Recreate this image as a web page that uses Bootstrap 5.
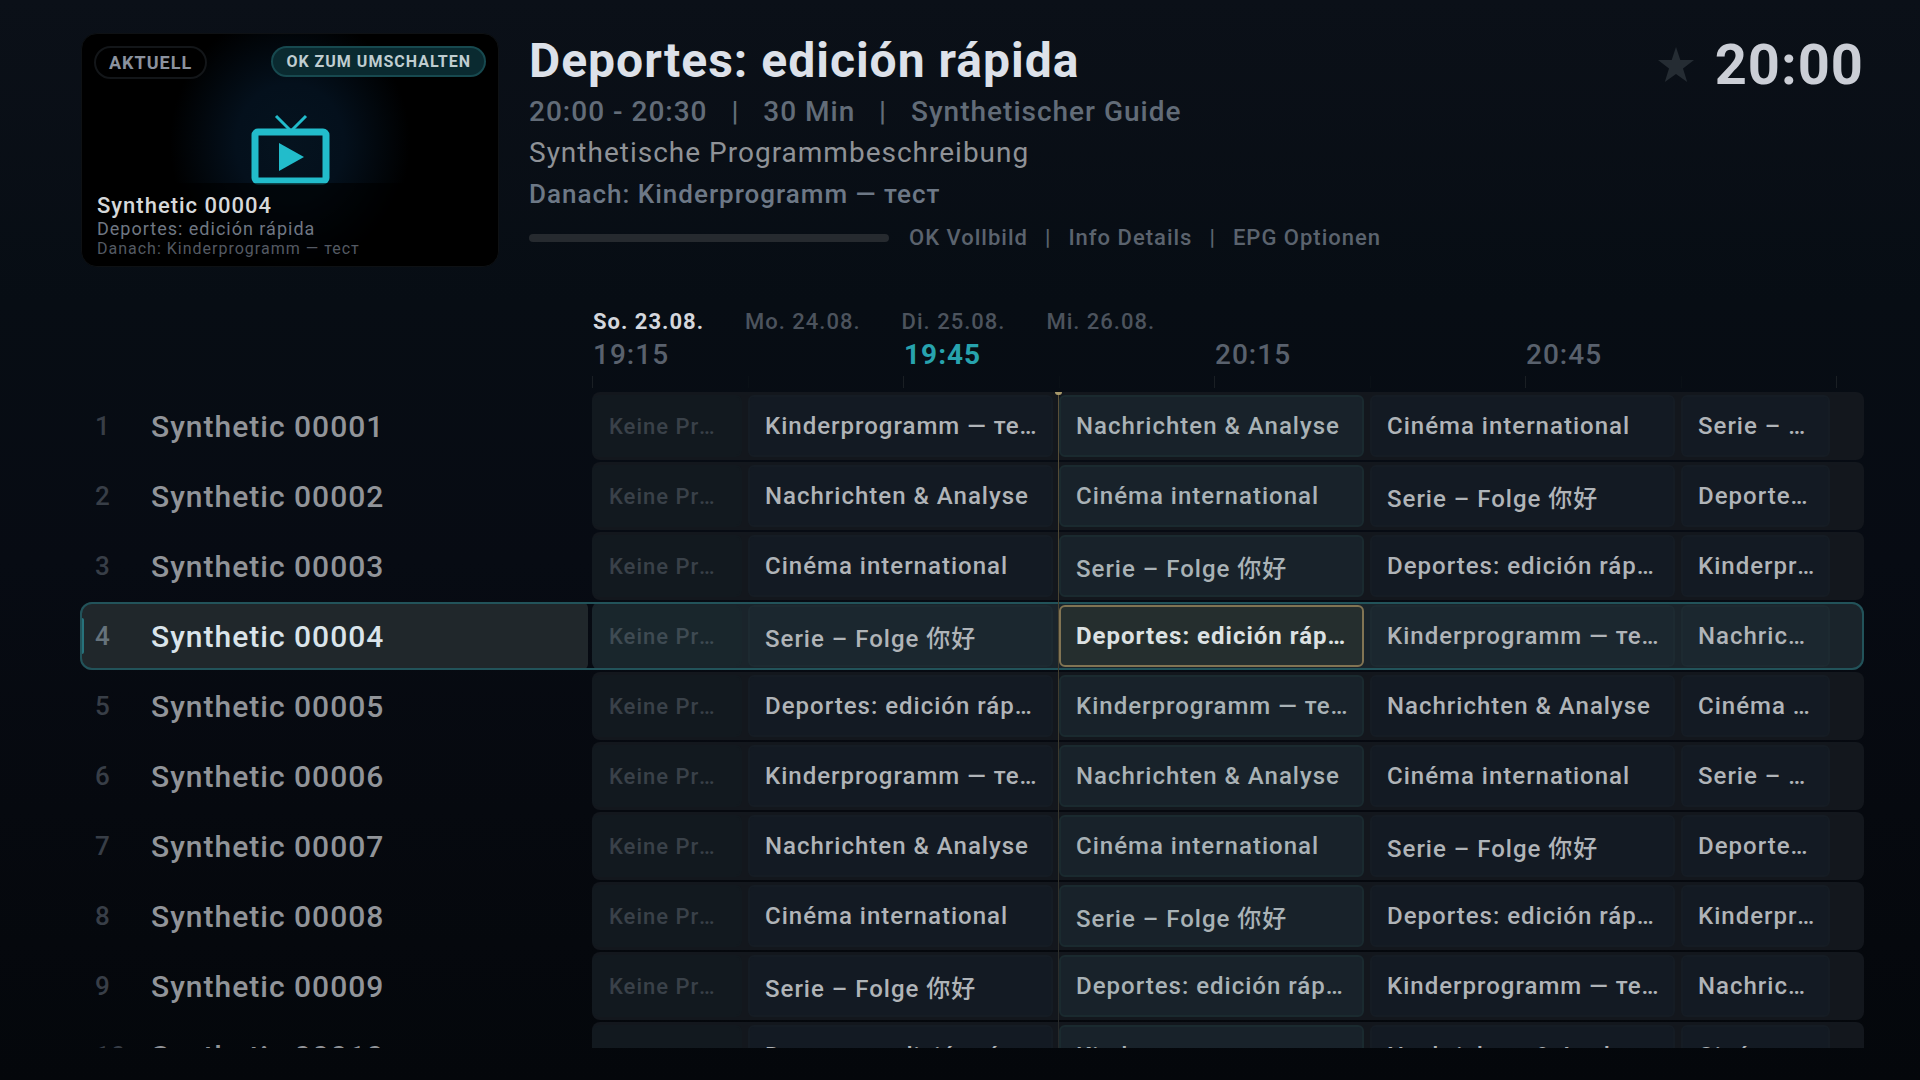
<!DOCTYPE html>
<html lang="de">
<head>
<meta charset="utf-8">
<meta name="viewport" content="width=device-width, initial-scale=1">
<title>TV Guide</title>
<link href="https://cdn.jsdelivr.net/npm/bootstrap@5.3.0/dist/css/bootstrap.min.css" rel="stylesheet">
<style>
  body {
    font-family: Roboto, "Noto Sans CJK SC", sans-serif;
    font-weight: 500;
    letter-spacing: 1px;
    color: #b0b4b8;
    background: linear-gradient(180deg, #0b1018 0%, #070d14 28%, #070b13 52%, #06090f 75%, #04070b 100%);
  }
  button { font: inherit; letter-spacing: inherit; color: inherit; background: none; border: 0; padding: 0; text-align: left; }
  .guide { padding: 33px 56px 32px 80px; }

  /* header */
  .top-info { gap: 30px; padding-left: 1px; }
  .preview { width: 418px; height: 234px; border-radius: 16px; border: 1px solid #0e1114; background: radial-gradient(ellipse 120px 132px at 50% 47%, #05131f 0%, #04101c 45%, #000 100%) #000; }
  .preview-tags { padding: 12px 12px 0; }
  .pill { border-radius: 18px; border: 2px solid; font-weight: 700; text-transform: uppercase; }
  .pill-now { font-size: 18px; line-height: 29px; padding: 0 13px; border-color: #131619; background: #000; color: #8b929e; }
  .pill-ok { font-size: 16px; line-height: 27px; padding: 0 13px; border-color: #17494f; background: #0a2a30; color: #bfcdd0; }
  .tv-icon { left: 169px; top: 80px; width: 80px; height: 72px; }
  .preview-text { padding: 11px 15px 8px; background: rgba(0, 0, 0, .62); }
  .preview-name { font-size: 22px; line-height: 24px; color: #d6d8da; }
  .preview-title { font-size: 18px; line-height: 22px; font-weight: 400; color: #6f7783; }
  .preview-next { font-size: 16px; line-height: 18px; font-weight: 400; color: #545a63; }

  .prog-title { font-size: 48px; line-height: 56px; font-weight: 700; color: #dde1e9; margin-bottom: 3px; }
  .prog-meta { font-size: 28px; line-height: 40px; color: #626c78; white-space: pre; }
  .prog-desc { font-size: 28px; line-height: 42px; font-weight: 400; color: #8f9297; }
  .prog-next { font-size: 26px; line-height: 40px; color: #6d7886; }
  .hint-row { gap: 20px; margin-top: 10px; font-size: 22px; line-height: 28px; color: #5b636e; }
  .hints { gap: 17px; }
  .prog-bar { width: 360px; height: 8px; border-radius: 4px; background: #262a2f; --bs-progress-bar-bg: #22bccb; }
  .star { width: 36px; height: 36px; }
  .clock-box { gap: 21px; height: 64px; }
  .clock { font-size: 56px; line-height: 64px; font-weight: 700; color: #cbced6; }

  /* time header */
  .time-head { margin-top: 39px; padding-left: 512px; }
  .days { gap: 41px; padding-left: 1px; font-size: 22px; line-height: 32px; color: #4c535d; }
  .days .active { color: #d4d7dd; font-weight: 700; }
  .scale { display: grid; grid-template-columns: repeat(4, 1fr); padding: 0 27px 0 1px; margin-bottom: 4px; font-size: 28px; line-height: 34px; color: #59616d; }
  .scale .current { color: #27a3ae; font-weight: 700; }
  .ticks { display: grid; grid-template-columns: repeat(8, 1fr) 2px; height: 12px; padding-right: 26px; margin-bottom: 4px; }
  .ticks i { border-left: 1px solid #0a1016; }
  .ticks i:nth-child(odd) { border-color: #1a1f24; }

  /* channel rows */
  .rows { min-height: 0; }
  .row-stack { gap: 2px; }
  .ch-row { height: 68px; flex: none; gap: 4px; position: relative; }
  .ch-cell { width: 508px; padding-left: 15px; flex: none; }
  .ch-num { width: 56px; font-size: 26px; color: #383e47; }
  .ch-name { font-size: 30px; color: #919499; }
  .lane { display: grid; grid-template-columns: 150fr 305fr 305fr 305fr 149fr; gap: 6px; padding: 3px 34px 3px 0; border-radius: 8px; background: #13171d; min-width: 0; }
  .slot { min-width: 0; padding: 0 13px 0 15px; border: 2px solid #151c24; border-radius: 6px; background: #131a23; font-size: 24px; line-height: normal; }
  .none { font-size: 22px; color: #3a4149; background: #12191f; border-color: #12191f; }
  .onair { background: #18222a; border-color: #1a2a2f; color: #a9b2b6; }
  .picked .ch-cell { background: #20272b; border-radius: 12px 6px 6px 12px; }
  .picked .ch-num { color: #66737c; }
  .picked .ch-name { color: #dae4ea; }
  .picked .lane { background: #1a242b; border-radius: 8px 12px 12px 8px; }
  .picked .slot { background: #1b272f; border-color: #1d2a31; }
  .picked .none { background: #19262c; border-color: #19262c; color: #3f4b53; }
  .picked .focused { background: #252e2e; border-color: #827453; color: #dce1e2; font-weight: 700; }
  .picked::after { content: ""; position: absolute; inset: 0; border: 2px solid #22535a; border-radius: 12px; pointer-events: none; }
  .picked::before { content: ""; position: absolute; left: 0; top: 16px; width: 4px; height: 36px; border-radius: 2px; background: #27727b; }

  .now-layer { left: 512px; right: 28px; top: 0; bottom: 0; pointer-events: none; }
  .now-line { left: 37.5%; top: 0; bottom: 0; width: 1px; margin-left: -1px; background: linear-gradient(180deg, #5c5138 0%, #443f2f 40%, #26292a 100%); }
  .now-tip { left: 37.5%; top: 0; margin-left: -4px; width: 7px; height: 3px; border-radius: 0 0 4px 4px; background: #a8996b; }
</style>
</head>
<body>
<main class="guide d-flex flex-column vh-100 overflow-hidden">

  <header class="top-info d-flex align-items-start">
    <section class="preview position-relative overflow-hidden flex-shrink-0 d-flex flex-column justify-content-between" aria-label="Vorschau">
      <svg class="tv-icon position-absolute" viewBox="0 0 80 72" fill="none" aria-hidden="true">
        <path d="M25 2l15 15L55 2" stroke="#22bccb" stroke-width="3"/>
        <rect x="4" y="18" width="71" height="49" rx="3" stroke="#22bccb" stroke-width="7"/>
        <path d="M28 29v28l25-14z" fill="#22bccb"/>
      </svg>
      <div class="preview-tags d-flex justify-content-between align-items-start">
        <span class="pill pill-now">Aktuell</span>
        <span class="pill pill-ok">OK zum Umschalten</span>
      </div>
      <div class="preview-text position-relative">
        <div class="preview-name">Synthetic 00004</div>
        <div class="preview-title">Deportes: edición rápida</div>
        <div class="preview-next">Danach: Kinderprogramm — тест</div>
      </div>
    </section>

    <section class="flex-grow-1">
      <h1 class="prog-title">Deportes: edición rápida</h1>
      <div class="prog-meta">20:00 - 20:30   |   30 Min   |   Synthetischer Guide</div>
      <div class="prog-desc">Synthetische Programmbeschreibung</div>
      <div class="prog-next">Danach: Kinderprogramm — тест</div>
      <div class="hint-row d-flex align-items-center">
        <div class="prog-bar progress" role="progressbar" aria-label="Fortschritt" aria-valuenow="0" aria-valuemin="0" aria-valuemax="100"><div class="progress-bar" style="width:0%"></div></div>
        <div class="hints d-flex"><span>OK Vollbild</span><span>|</span><span>Info Details</span><span>|</span><span>EPG Optionen</span></div>
      </div>
    </section>

    <div class="clock-box d-flex align-items-center flex-shrink-0">
      <svg class="star" viewBox="0 0 36 36" aria-hidden="true"><path fill="#252c33" d="M18 0l4.300 13H36L25 21.500l4.200 13.500L18 27l-11.200 8L11 21.500 0 13h13.700z"/></svg>
      <time class="clock">20:00</time>
    </div>
  </header>

  <section class="time-head">
    <nav class="days d-flex" aria-label="Tage">
      <button type="button" class="active">So. 23.08.</button>
      <button type="button">Mo. 24.08.</button>
      <button type="button">Di. 25.08.</button>
      <button type="button">Mi. 26.08.</button>
    </nav>
    <div class="scale">
      <time>19:15</time><time class="current">19:45</time><time>20:15</time><time>20:45</time>
    </div>
    <div class="ticks" aria-hidden="true"><i></i><i></i><i></i><i></i><i></i><i></i><i></i><i></i><i></i></div>
  </section>

  <section class="rows position-relative overflow-hidden flex-grow-1">
    <div class="row-stack d-flex flex-column">
      <div class="ch-row d-flex">
        <div class="ch-cell d-flex align-items-center"><span class="ch-num">1</span><span class="ch-name">Synthetic 00001</span></div>
        <div class="lane flex-grow-1">
          <button type="button" class="slot none text-truncate">Keine Programm</button>
          <button type="button" class="slot text-truncate">Kinderprogramm — тест</button>
          <button type="button" class="slot onair text-truncate">Nachrichten &amp; Analyse</button>
          <button type="button" class="slot text-truncate">Cinéma international</button>
          <button type="button" class="slot text-truncate">Serie – Folge</button>
        </div>
      </div>
      <div class="ch-row d-flex">
        <div class="ch-cell d-flex align-items-center"><span class="ch-num">2</span><span class="ch-name">Synthetic 00002</span></div>
        <div class="lane flex-grow-1">
          <button type="button" class="slot none text-truncate">Keine Programm</button>
          <button type="button" class="slot text-truncate">Nachrichten &amp; Analyse</button>
          <button type="button" class="slot onair text-truncate">Cinéma international</button>
          <button type="button" class="slot text-truncate">Serie – Folge 你好</button>
          <button type="button" class="slot text-truncate">Deportes: edición rápida</button>
        </div>
      </div>
      <div class="ch-row d-flex">
        <div class="ch-cell d-flex align-items-center"><span class="ch-num">3</span><span class="ch-name">Synthetic 00003</span></div>
        <div class="lane flex-grow-1">
          <button type="button" class="slot none text-truncate">Keine Programm</button>
          <button type="button" class="slot text-truncate">Cinéma international</button>
          <button type="button" class="slot onair text-truncate">Serie – Folge 你好</button>
          <button type="button" class="slot text-truncate">Deportes: edición rápida</button>
          <button type="button" class="slot text-truncate">Kinderprogramm — тест</button>
        </div>
      </div>
      <div class="ch-row picked d-flex">
        <div class="ch-cell d-flex align-items-center"><span class="ch-num">4</span><span class="ch-name">Synthetic 00004</span></div>
        <div class="lane flex-grow-1">
          <button type="button" class="slot none text-truncate">Keine Programm</button>
          <button type="button" class="slot text-truncate">Serie – Folge 你好</button>
          <button type="button" class="slot onair focused text-truncate">Deportes: edición rápida</button>
          <button type="button" class="slot text-truncate">Kinderprogramm — тест</button>
          <button type="button" class="slot text-truncate">Nachrichten &amp; Analyse</button>
        </div>
      </div>
      <div class="ch-row d-flex">
        <div class="ch-cell d-flex align-items-center"><span class="ch-num">5</span><span class="ch-name">Synthetic 00005</span></div>
        <div class="lane flex-grow-1">
          <button type="button" class="slot none text-truncate">Keine Programm</button>
          <button type="button" class="slot text-truncate">Deportes: edición rápida</button>
          <button type="button" class="slot onair text-truncate">Kinderprogramm — тест</button>
          <button type="button" class="slot text-truncate">Nachrichten &amp; Analyse</button>
          <button type="button" class="slot text-truncate">Cinéma international</button>
        </div>
      </div>
      <div class="ch-row d-flex">
        <div class="ch-cell d-flex align-items-center"><span class="ch-num">6</span><span class="ch-name">Synthetic 00006</span></div>
        <div class="lane flex-grow-1">
          <button type="button" class="slot none text-truncate">Keine Programm</button>
          <button type="button" class="slot text-truncate">Kinderprogramm — тест</button>
          <button type="button" class="slot onair text-truncate">Nachrichten &amp; Analyse</button>
          <button type="button" class="slot text-truncate">Cinéma international</button>
          <button type="button" class="slot text-truncate">Serie – Folge</button>
        </div>
      </div>
      <div class="ch-row d-flex">
        <div class="ch-cell d-flex align-items-center"><span class="ch-num">7</span><span class="ch-name">Synthetic 00007</span></div>
        <div class="lane flex-grow-1">
          <button type="button" class="slot none text-truncate">Keine Programm</button>
          <button type="button" class="slot text-truncate">Nachrichten &amp; Analyse</button>
          <button type="button" class="slot onair text-truncate">Cinéma international</button>
          <button type="button" class="slot text-truncate">Serie – Folge 你好</button>
          <button type="button" class="slot text-truncate">Deportes: edición rápida</button>
        </div>
      </div>
      <div class="ch-row d-flex">
        <div class="ch-cell d-flex align-items-center"><span class="ch-num">8</span><span class="ch-name">Synthetic 00008</span></div>
        <div class="lane flex-grow-1">
          <button type="button" class="slot none text-truncate">Keine Programm</button>
          <button type="button" class="slot text-truncate">Cinéma international</button>
          <button type="button" class="slot onair text-truncate">Serie – Folge 你好</button>
          <button type="button" class="slot text-truncate">Deportes: edición rápida</button>
          <button type="button" class="slot text-truncate">Kinderprogramm — тест</button>
        </div>
      </div>
      <div class="ch-row d-flex">
        <div class="ch-cell d-flex align-items-center"><span class="ch-num">9</span><span class="ch-name">Synthetic 00009</span></div>
        <div class="lane flex-grow-1">
          <button type="button" class="slot none text-truncate">Keine Programm</button>
          <button type="button" class="slot text-truncate">Serie – Folge 你好</button>
          <button type="button" class="slot onair text-truncate">Deportes: edición rápida</button>
          <button type="button" class="slot text-truncate">Kinderprogramm — тест</button>
          <button type="button" class="slot text-truncate">Nachrichten &amp; Analyse</button>
        </div>
      </div>
      <div class="ch-row d-flex">
        <div class="ch-cell d-flex align-items-center"><span class="ch-num">10</span><span class="ch-name">Synthetic 00010</span></div>
        <div class="lane flex-grow-1">
          <button type="button" class="slot none text-truncate">Keine Programm</button>
          <button type="button" class="slot text-truncate">Deportes: edición rápida</button>
          <button type="button" class="slot onair text-truncate">Kinderprogramm — тест</button>
          <button type="button" class="slot text-truncate">Nachrichten &amp; Analyse</button>
          <button type="button" class="slot text-truncate">Cinéma international</button>
        </div>
      </div>
    </div>
    <div class="now-layer position-absolute" aria-hidden="true">
      <div class="now-line position-absolute"></div>
      <div class="now-tip position-absolute"></div>
    </div>
  </section>
</main>
<script src="https://cdn.jsdelivr.net/npm/bootstrap@5.3.0/dist/js/bootstrap.bundle.min.js"></script>
</body>
</html>
